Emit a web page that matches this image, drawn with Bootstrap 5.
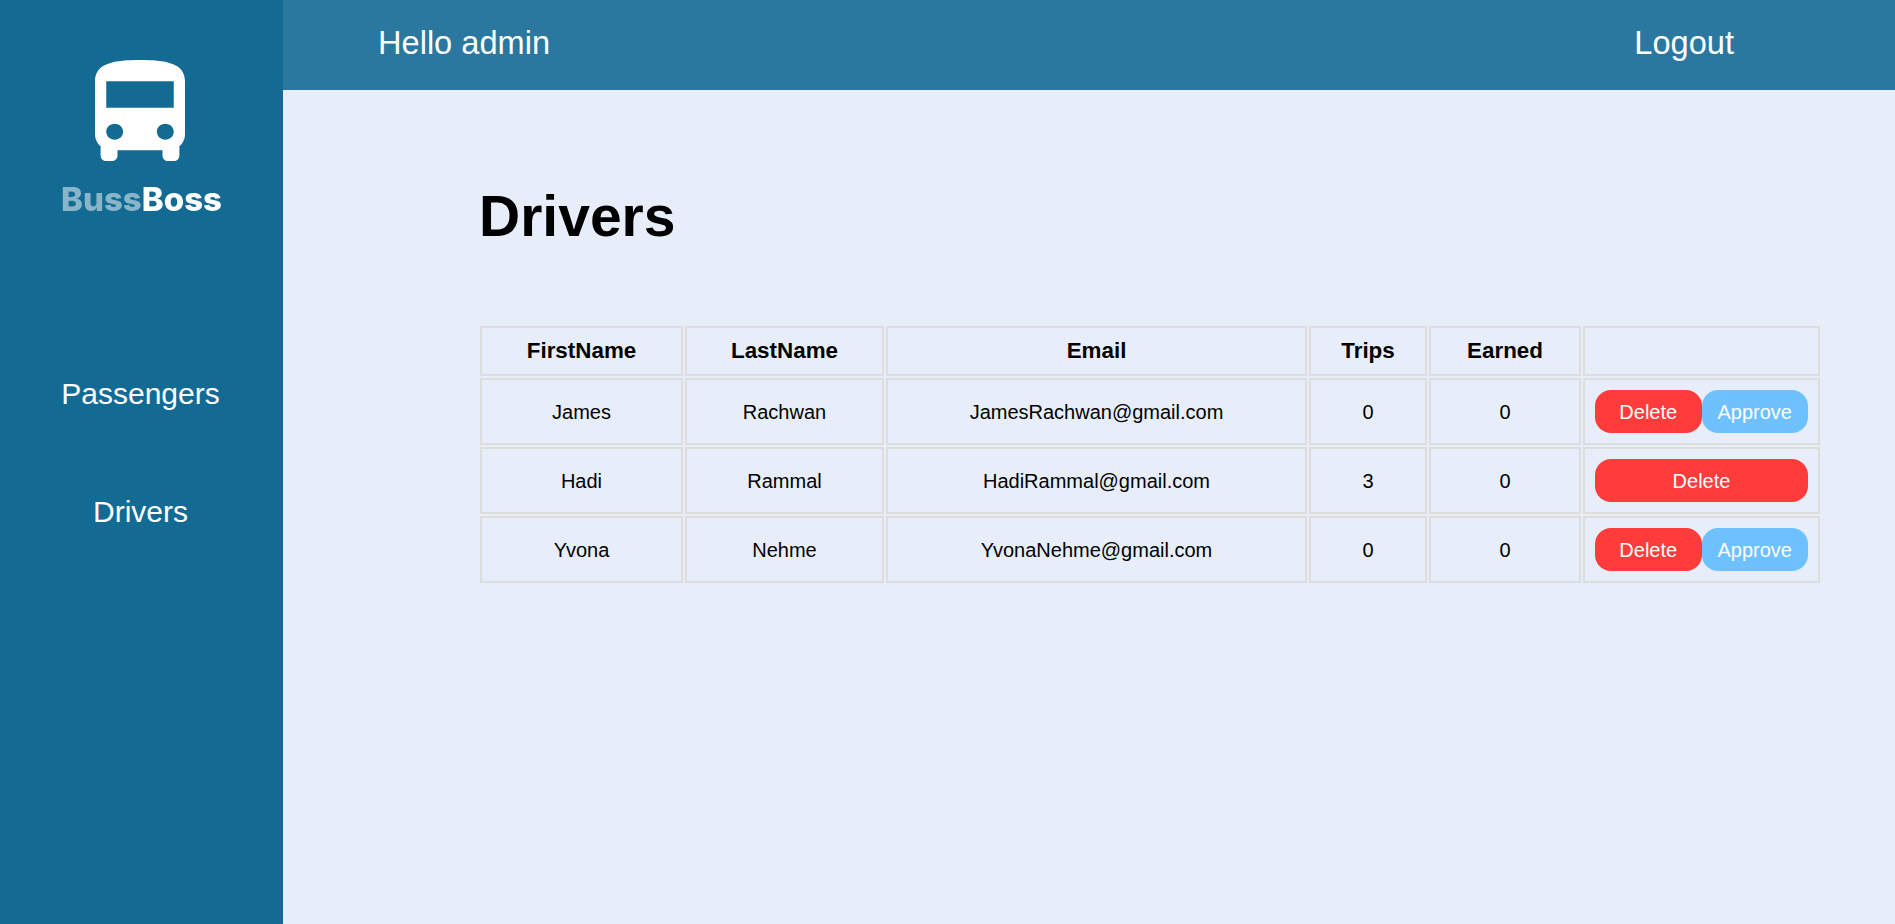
<!DOCTYPE html>
<html lang="en">
<head>
  <meta charset="UTF-8" />
  <meta name="viewport" content="width=device-width, initial-scale=1" />
  <title>BussBoss - Drivers</title>
  <link href="https://cdn.jsdelivr.net/npm/bootstrap@5.3.3/dist/css/bootstrap.min.css" rel="stylesheet" />
<style>
    body {
        font-family: "Liberation Sans", Arial, sans-serif;
        background: #e8eef9;
        color: #000;
    }
    .app-shell {
        min-height: 924px;
    }
    .side-panel {
        width: 283px;
        background: #136b94;
    }
    .bus-logo {
        display: block;
        width: 90px;
        height: 101px;
        margin: 60px auto 0 95px;
    }
    .brand-name {
        font-family: Inter, "Liberation Sans", sans-serif;
        font-weight: 800;
        font-size: 33px;
        line-height: 38px;
        margin-top: 19px;
        color: #fff;
        filter: blur(.4px);
    }
    .brand-name span {
        opacity: .5;
    }
    .side-menu {
        margin-top: 153px;
        gap: 72px;
        padding-right: 2px;
    }
    .side-menu .nav-link {
        color: #fff;
        font-size: 30px;
        line-height: 46px;
        padding: 0;
    }
    .top-strip {
        height: 90px;
        background: #2a789f;
        color: #fff;
        font-size: 32.6px;
        padding: 0 161px 4px 95px;
    }
    .top-strip a {
        color: #fff;
        text-decoration: none;
    }
    .page-body {
        padding: 0 73px 0 195px;
    }
    .page-title {
        font-size: 57px;
        font-weight: 700;
        line-height: 68px;
        margin: 92px 0 74px 1px;
    }
    .drivers-table {
        border-collapse: separate;
        border-spacing: 2px;
        table-layout: fixed;
        width: 1344px;
        text-align: center;
    }
    .drivers-table th,
    .drivers-table td {
        border: 2px solid #dddddd;
        vertical-align: middle;
    }
    .drivers-table th {
        font-size: 22.4px;
        line-height: 33px;
        padding: 5.5px 0 7.5px;
    }
    .drivers-table td {
        font-size: 20px;
        padding: 10px;
    }
    .col-first { width: 203px; }
    .col-last { width: 199px; }
    .col-email { width: 421px; }
    .col-trips { width: 118px; }
    .col-earned { width: 152px; }
    .pill-btn {
        color: #fff;
        border: 0;
        border-radius: 16px;
        font-size: 20px;
        height: 43px;
        padding: 0;
    }
    .pill-btn:hover {
        color: #fff;
    }
    .pill-delete, .pill-delete:hover { background: #ff3c3c; }
    .pill-approve, .pill-approve:hover { background: #6ec1ff; }
</style>
</head>
<body>

  <div class="app-shell d-flex">
    <aside class="side-panel flex-shrink-0 text-center">
      <svg class="bus-logo" viewBox="4 2 16 19" preserveAspectRatio="none" fill="#fff">
        <path d="M4 16c0 .88.39 1.67 1 2.22V20c0 .55.45 1 1 1h1c.55 0 1-.45 1-1v-1h8v1c0 .55.45 1 1 1h1c.55 0 1-.45 1-1v-1.78c.61-.55 1-1.34 1-2.22V6c0-3.5-3.58-4-8-4s-8 .5-8 4v10zm3.5 1c-.83 0-1.5-.67-1.5-1.5S6.67 14 7.5 14s1.5.67 1.5 1.5S8.33 17 7.5 17zm9 0c-.83 0-1.5-.67-1.5-1.5s.67-1.5 1.5-1.5 1.5.67 1.5 1.5-.67 1.5-1.5 1.5zm1.5-6H6V6h12v5z"/>
      </svg>
      <div class="brand-name"><span>Buss</span>Boss</div>
      <nav class="nav flex-column side-menu">
        <a class="nav-link" href="#">Passengers</a>
        <a class="nav-link" href="#">Drivers</a>
      </nav>
    </aside>

    <div class="flex-grow-1">
      <header class="top-strip d-flex justify-content-between align-items-center">
        <span>Hello admin</span>
        <a href="#">Logout</a>
      </header>

      <main class="page-body">
        <h1 class="page-title">Drivers</h1>
        <table class="drivers-table">
          <colgroup>
            <col class="col-first" />
            <col class="col-last" />
            <col class="col-email" />
            <col class="col-trips" />
            <col class="col-earned" />
            <col />
          </colgroup>
          <thead>
            <tr>
              <th>FirstName</th>
              <th>LastName</th>
              <th>Email</th>
              <th>Trips</th>
              <th>Earned</th>
              <th></th>
            </tr>
          </thead>
          <tbody id="daftar_driver"></tbody>
        </table>
      </main>
    </div>
  </div>

  <script src="https://cdn.jsdelivr.net/npm/bootstrap@5.3.3/dist/js/bootstrap.bundle.min.js"></script>

  <script>
    const drivers = [
      { first: 'James', last: 'Rachwan', email: 'JamesRachwan@gmail.com', trips: 0, earned: 0, approved: false },
      { first: 'Hadi', last: 'Rammal', email: 'HadiRammal@gmail.com', trips: 3, earned: 0, approved: true },
      { first: 'Yvona', last: 'Nehme', email: 'YvonaNehme@gmail.com', trips: 0, earned: 0, approved: false }
    ];

    const tbody = document.getElementById('daftar_driver');
    drivers.forEach(d => {
      const row = document.createElement('tr');
      row.innerHTML = `
        <td>${d.first}</td>
        <td>${d.last}</td>
        <td>${d.email}</td>
        <td>${d.trips}</td>
        <td>${d.earned}</td>
        <td>
          <div class="d-flex">
            <button class="btn pill-btn pill-delete flex-fill w-50">Delete</button>
            ${d.approved ? '' : '<button class="btn pill-btn pill-approve flex-fill w-50">Approve</button>'}
          </div>
        </td>`;
      tbody.appendChild(row);
    });
  </script>

</body>
</html>
